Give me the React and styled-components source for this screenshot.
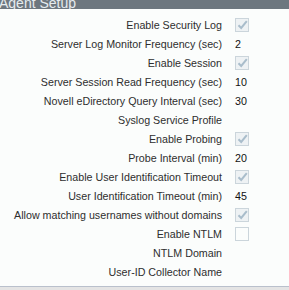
import React from "react";
import styled, { createGlobalStyle } from "styled-components";

const Global = createGlobalStyle`
  html, body { margin: 0; padding: 0; background: #e4e4e4; }
  body { font-family: "Liberation Sans", Arial, sans-serif; }
`;

const Panel = styled.div`
  width: 289px;
  display: flex;
  flex-direction: column;
`;

const Header = styled.div`
  height: 9px;
  background: #6d777f;
  display: flex;
  align-items: flex-end;
  overflow: hidden;
`;

const Title = styled.span`
  color: #e6ecef;
  font-size: 14px;
  line-height: 12px;
  white-space: nowrap;
  margin-left: -1px;
`;

const Body = styled.div`
  background: #fbfdfc;
  padding: 6px 0 5px;
  border-bottom: 1px solid #b9c0cc;
  display: flex;
  flex-direction: column;
`;

const Row = styled.div`
  height: 19px;
  display: grid;
  grid-template-columns: 222px 1fr;
  column-gap: 13px;
  align-items: center;
  font-size: 10.7px;
`;

const Label = styled.div`
  text-align: right;
  color: #2e2e2e;
  white-space: nowrap;
`;

const Value = styled.div`
  color: #111;
  display: flex;
  align-items: center;
`;

const Box = styled.span`
  width: 12px;
  height: 12px;
  border: 1px solid #cbd5db;
  background: ${(p) => (p.$checked ? "#eef2f4" : "#fbfdfc")};
  display: flex;
  align-items: center;
  justify-content: center;
`;

const Check = () => (
  <svg width="11" height="10" viewBox="0 0 11 10">
    <path d="M1.5 5.2 L4.2 8 L9.8 1.2" fill="none" stroke="#a9bdcb" strokeWidth="2" />
  </svg>
);

const rows = [
  ["Enable Security Log", { check: true }],
  ["Server Log Monitor Frequency (sec)", { text: "2" }],
  ["Enable Session", { check: true }],
  ["Server Session Read Frequency (sec)", { text: "10" }],
  ["Novell eDirectory Query Interval (sec)", { text: "30" }],
  ["Syslog Service Profile", {}],
  ["Enable Probing", { check: true }],
  ["Probe Interval (min)", { text: "20" }],
  ["Enable User Identification Timeout", { check: true }],
  ["User Identification Timeout (min)", { text: "45" }],
  ["Allow matching usernames without domains", { check: true }],
  ["Enable NTLM", { check: false }],
  ["NTLM Domain", {}],
  ["User-ID Collector Name", {}],
];

export default function App() {
  return (
    <Panel>
      <Global />
      <Header>
        <Title>Agent Setup</Title>
      </Header>
      <Body>
        {rows.map(([label, v]) => (
          <Row key={label}>
            <Label>{label}</Label>
            <Value>
              {v.check !== undefined ? (
                <Box $checked={v.check}>{v.check && <Check />}</Box>
              ) : (
                v.text
              )}
            </Value>
          </Row>
        ))}
      </Body>
    </Panel>
  );
}
